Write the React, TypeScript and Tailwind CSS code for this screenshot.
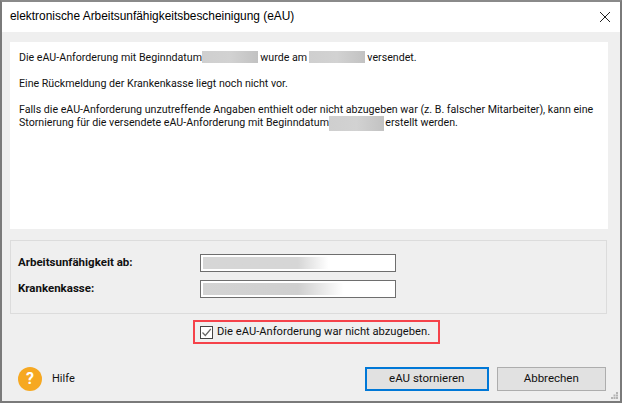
import React from "react";

function Redact({ w, h = "h-[12px] align-[-2px]" }: { w: string; h?: string }) {
  return <span className={`inline-block bg-gradient-to-r from-[#cfcfcf] via-[#d2d2d2] to-[#c2c2c2] ${w} ${h}`} />;
}

export default function App() {
  return (
    <div className="relative w-[622px] h-[403px] overflow-hidden bg-[#efefef] border-2 border-[#7a7a7a] border-t-[#8a8a8a] flex flex-col text-[#111] font-['Roboto',sans-serif]">
      <div className="h-[30px] shrink-0 bg-white flex items-center justify-between pl-[8px] pr-[7px]">
        <span className="text-[11.9px] text-black font-['Liberation_Sans',sans-serif]">elektronische Arbeitsunfähigkeitsbescheinigung (eAU)</span>
        <svg width="12" height="12" viewBox="0 0 12 12" className="mr-[2px]" fill="none" stroke="#222" strokeWidth="1">
          <path d="M1 1 L11 11 M11 1 L1 11" />
        </svg>
      </div>

      <div className="flex-1 flex flex-col px-[8px] pt-[10px]">
        <div className="h-[187px] w-[598px] shrink-0 bg-white pl-[9px] pt-[9px] text-[10.65px] leading-[14px]">
          <p className="h-[26px]">
            Die eAU-Anforderung mit Beginndatum <Redact w="w-[56px] -ml-[3px]" /> wurde am <Redact w="w-[56px] -ml-[1px]" /> versendet.
          </p>
          <p className="h-[26px]">Eine Rückmeldung der Krankenkasse liegt noch nicht vor.</p>
          <p className="leading-[13px] whitespace-nowrap">
            Falls die eAU-Anforderung unzutreffende Angaben enthielt oder nicht abzugeben war (z. B. falscher Mitarbeiter), kann eine
            <br />
            Stornierung für die versendete eAU-Anforderung mit Beginndatum <Redact w="w-[55px] -ml-[3px] -mr-[1px]" h="h-[15px] align-[-3px] -my-[2px]" /> erstellt werden.
          </p>
        </div>

        <div className="mt-[11px] h-[74px] w-[597px] shrink-0 border border-[#dcdcdc] pl-[7px] pt-[13px] flex flex-col gap-[8px] text-[11.5px]">
          <div className="flex items-start h-[18px]">
            <span className="w-[182px] font-bold leading-[14px] mt-[1px]">Arbeitsunfähigkeit ab:</span>
            <div className="w-[196px] h-[18px] border border-[#6e6e6e] bg-white p-[2px] overflow-hidden">
              <div className="h-full blur-[0.5px] bg-gradient-to-r from-[#d6d6d6] via-[#d6d6d6] via-50% to-white to-66%" />
            </div>
          </div>
          <div className="flex items-start h-[18px]">
            <span className="w-[182px] font-bold leading-[14px] mt-[1px]">Krankenkasse:</span>
            <div className="w-[196px] h-[18px] border border-[#6e6e6e] bg-white p-[2px] overflow-hidden">
              <div className="h-full blur-[0.5px] bg-gradient-to-r from-[#d4d4d4] via-[#cfcfcf] via-50% to-white to-74%" />
            </div>
          </div>
        </div>

        <div className="mt-[6px] h-[24px] flex justify-start pl-[183px] shrink-0">
          <div className="w-[247px] h-[24px] border-[2px] border-[#f5424a] flex items-center pl-[5px] gap-[4px]">
            <span className="w-[13px] h-[13px] border border-[#444] bg-white flex items-center justify-center">
              <svg width="11" height="11" viewBox="0 0 11 11" fill="none" stroke="#666" strokeWidth="1.2">
                <path d="M1.5 5.5 L4.3 8.5 L9.8 2" />
              </svg>
            </span>
            <span className="text-[11.2px] whitespace-nowrap">Die eAU-Anforderung war nicht abzugeben.</span>
          </div>
        </div>

        <div className="mt-[23px] flex items-center shrink-0 h-[24px]">
          <div className="ml-[8px] w-[24px] h-[24px] rounded-full bg-[#f6a821] flex items-center justify-center text-white font-bold text-[16px]">?</div>
          <span className="ml-[10px] text-[11px]">Hilfe</span>
          <button className="ml-[290px] w-[124px] h-[24px] bg-[#e1e1e1] border-[2px] border-[#0078d7] text-[11.5px] text-[#111]">eAU stornieren</button>
          <button className="ml-[8px] w-[109px] h-[24px] bg-[#e1e1e1] border border-[#adadad] text-[11.5px] text-[#111]">Abbrechen</button>
        </div>
      </div>

      <svg width="8" height="8" viewBox="0 0 8 8" className="absolute right-[1px] bottom-[1px]" fill="#b4b4b4">
        <rect x="5" y="0" width="2" height="2" />
        <rect x="2.5" y="2.5" width="2" height="2" />
        <rect x="5" y="2.5" width="2" height="2" />
        <rect x="0" y="5" width="2" height="2" />
        <rect x="2.5" y="5" width="2" height="2" />
        <rect x="5" y="5" width="2" height="2" />
      </svg>
    </div>
  );
}
